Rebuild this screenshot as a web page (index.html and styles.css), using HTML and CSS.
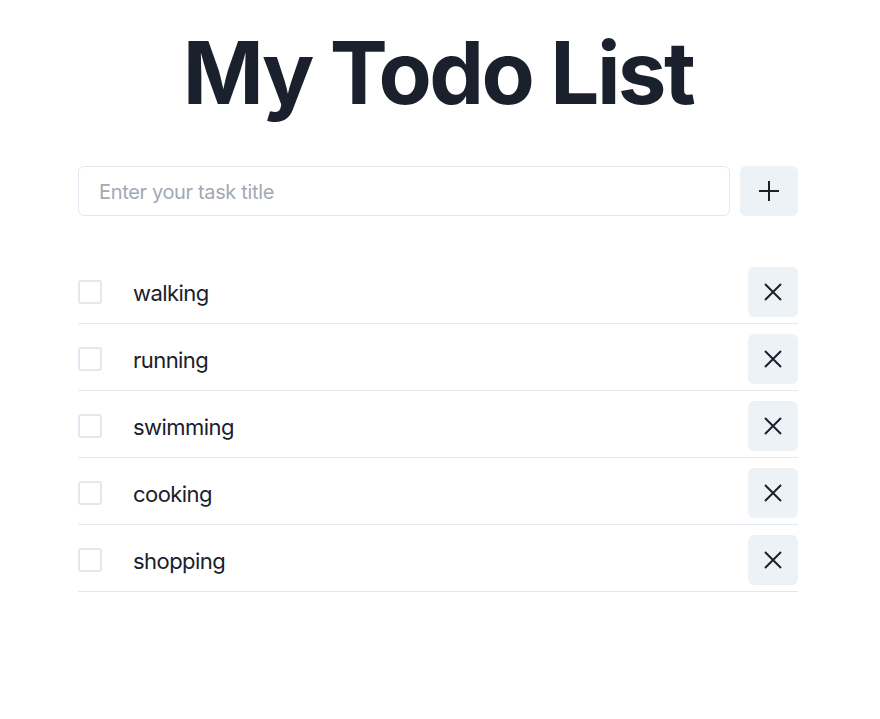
FILE: index.html
```html
<!DOCTYPE html>
<html lang="en">
<head>
<meta charset="utf-8">
<title>My Todo List</title>
<link rel="stylesheet" href="styles.css">
</head>
<body>
<main class="app">
  <h1 class="title">My Todo List</h1>
  <form class="add-form">
    <input class="task-input" type="text" placeholder="Enter your task title">
    <button class="icon-btn add-btn" type="button" aria-label="Add">
      <svg width="22" height="22" viewBox="0 0 22 22"><path d="M11 1v20M1 11h20" stroke="#1A202C" stroke-width="2" fill="none"/></svg>
    </button>
  </form>
  <ul class="list">
    <li class="row"><span class="check"></span><span class="label">walking</span><button class="icon-btn del-btn" type="button" aria-label="Delete"><svg width="20" height="20" viewBox="0 0 20 20"><path d="M2 2l16 16M18 2L2 18" stroke="#1A202C" stroke-width="2" fill="none"/></svg></button></li>
    <li class="row"><span class="check"></span><span class="label">running</span><button class="icon-btn del-btn" type="button" aria-label="Delete"><svg width="20" height="20" viewBox="0 0 20 20"><path d="M2 2l16 16M18 2L2 18" stroke="#1A202C" stroke-width="2" fill="none"/></svg></button></li>
    <li class="row"><span class="check"></span><span class="label">swimming</span><button class="icon-btn del-btn" type="button" aria-label="Delete"><svg width="20" height="20" viewBox="0 0 20 20"><path d="M2 2l16 16M18 2L2 18" stroke="#1A202C" stroke-width="2" fill="none"/></svg></button></li>
    <li class="row"><span class="check"></span><span class="label">cooking</span><button class="icon-btn del-btn" type="button" aria-label="Delete"><svg width="20" height="20" viewBox="0 0 20 20"><path d="M2 2l16 16M18 2L2 18" stroke="#1A202C" stroke-width="2" fill="none"/></svg></button></li>
    <li class="row"><span class="check"></span><span class="label">shopping</span><button class="icon-btn del-btn" type="button" aria-label="Delete"><svg width="20" height="20" viewBox="0 0 20 20"><path d="M2 2l16 16M18 2L2 18" stroke="#1A202C" stroke-width="2" fill="none"/></svg></button></li>
  </ul>
</main>
</body>
</html>
```
FILE: styles.css
```css
* { box-sizing: border-box; }
html, body { margin: 0; padding: 0; background: #fff; }
body {
  font-family: Inter, "Noto Sans", sans-serif;
  color: #1A202C;
}
.app {
  width: 720px;
  margin-left: 78px;
  padding-top: 21px;
}
.title {
  margin: 0;
  height: 104px;
  font-size: 87px;
  line-height: 1.2;
  font-weight: 700;
  text-align: center;
  letter-spacing: -2.6px;
}
.add-form {
  display: flex;
  gap: 10px;
  margin-top: 41px;
}
.task-input {
  flex: 1;
  height: 50px;
  border: 1px solid #E2E8F0;
  border-radius: 6px;
  padding: 2px 20px 0;
  font-family: inherit;
  font-size: 20px;
  letter-spacing: -0.35px;
  color: #1A202C;
  outline: none;
}
.task-input::placeholder { color: #A2A9B4; }
.icon-btn {
  border: 0;
  border-radius: 6px;
  background: #EDF2F7;
  display: flex;
  align-items: center;
  justify-content: center;
  padding: 0;
  cursor: pointer;
}
.add-btn { width: 58px; height: 50px; }
.del-btn { width: 50px; height: 50px; }
.list {
  list-style: none;
  margin: 51px 0 0;
  padding: 0;
  display: flex;
  flex-direction: column;
  gap: 10px;
}
.row {
  display: flex;
  align-items: center;
  padding-bottom: 6px;
  border-bottom: 1px solid #E2E8F0;
}
.check {
  width: 24px;
  height: 24px;
  border: 2px solid #E2E8F0;
  border-radius: 3px;
  flex: none;
}
.label {
  flex: 1;
  margin-left: 31px;
  padding-top: 2px;
  font-size: 22px;
  letter-spacing: -0.55px;
}
```
